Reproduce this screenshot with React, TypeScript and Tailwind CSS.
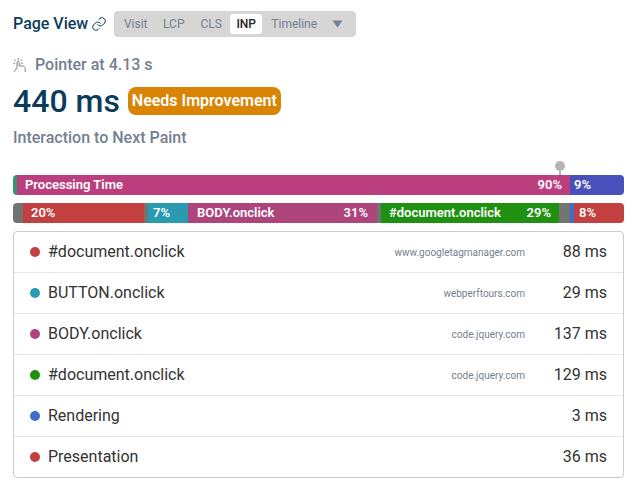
import React from "react";

const rows = [
  { c: "bg-[#c24040]", n: "#document.onclick", d: "www.googletagmanager.com", v: "88 ms" },
  { c: "bg-[#2a9aae]", n: "BUTTON.onclick", d: "webperftours.com", v: "29 ms" },
  { c: "bg-[#ae447c]", n: "BODY.onclick", d: "code.jquery.com", v: "137 ms" },
  { c: "bg-[#209010]", n: "#document.onclick", d: "code.jquery.com", v: "129 ms" },
  { c: "bg-[#3f6fc9]", n: "Rendering", d: "", v: "3 ms" },
  { c: "bg-[#c24040]", n: "Presentation", d: "", v: "36 ms" },
];

function Seg({ w, c, children, between }: { w: string; c: string; children?: React.ReactNode; between?: boolean }) {
  return (
    <div className={`${w} ${c} h-full shrink-0 flex items-center ${between ? "justify-between" : ""} text-white text-[13px] font-semibold overflow-hidden whitespace-nowrap`}>
      {children}
    </div>
  );
}

export default function App() {
  return (
    <div className="w-[643px] h-[488px] bg-white pl-[13px] pr-[19px] pt-[11px] overflow-hidden font-['Roboto',sans-serif]">
      <div className="flex items-center h-[26px]">
        <span className="text-[16px] font-medium text-[#0c3c5c]">Page View</span>
        <svg className="ml-[3px] w-[16px] h-[16px] text-[#0c3c5c]" viewBox="0 0 24 24" fill="none" stroke="currentColor" strokeWidth="1.500" strokeLinecap="round" strokeLinejoin="round">
          <path d="M10 13a5 5 0 0 0 7.500.5l3-3a5 5 0 0 0-7-7l-1.700 1.700" />
          <path d="M14 11a5 5 0 0 0-7.500-.5l-3 3a5 5 0 0 0 7 7l1.700-1.700" />
        </svg>
        <div className="ml-[7px] w-[242px] h-[26px] bg-[#d6d6d6] rounded-[4px] flex items-center pl-[2px] text-[12px] text-[#74808e]">
          <span className="w-[39px] text-center">Visit</span>
          <span className="w-[37px] text-center">LCP</span>
          <span className="w-[38px] text-center">CLS</span>
          <span className="w-[32px] h-[20px] bg-white rounded-[3px] flex items-center justify-center text-[#222] font-medium">INP</span>
          <span className="w-[64px] text-center">Timeline</span>
          <svg className="ml-[6px] w-[11px] h-[8px]" viewBox="0 0 11 8"><path d="M0.500 0.500h10L5.500 7.500z" fill="#74808e" /></svg>
        </div>
      </div>
      <div className="flex items-center mt-[18px] h-[20px]">
        <svg className="w-[14px] h-[16px] text-[#74808e]" viewBox="0 0 14 16" fill="none" stroke="currentColor" strokeWidth="1" strokeLinecap="round" strokeLinejoin="round">
          <path d="M1.500 14.500L4 10.500V5.500a1.100 1.100 0 0 1 2.200 0V9h3.300c1.600 0 2.700 1 2.700 2.500v3" />
          <path d="M5.100 2.800V1.200M2.300 3.600l-1-.8M7.900 3.600l1-.8M1.800 6.200H.8M8.500 6.200h1" />
        </svg>
        <span className="ml-[8px] text-[16px] text-[#74808e] font-medium">Pointer at 4.13 s</span>
      </div>
      <div className="flex items-center mt-[8px] h-[36px]">
        <span className="text-[32px] font-medium text-[#0c3c5c] leading-none">440 ms</span>
        <span className="ml-[8px] h-[28px] w-[153px] rounded-[8px] bg-[#d98404] text-white text-[16px] font-semibold flex items-center justify-center">Needs Improvement</span>
      </div>
      <div className="mt-[9px] h-[20px] flex items-center text-[16px] font-medium text-[#74808e]">Interaction to Next Paint</div>

      <div className="mt-[13px] h-[14px] flex justify-end pr-[59px]">
        <div className="flex flex-col items-center w-[10px]">
          <div className="w-[10px] h-[10px] rounded-full bg-[#b4b4b4]" />
          <div className="w-[2px] h-[4px] bg-[#b4b4b4]" />
        </div>
      </div>
      <div className="h-[20px] w-[611px] flex rounded-[4px] overflow-hidden">
        <Seg w="w-[4px]" c="bg-[#36946a]" />
        <Seg w="w-[553px]" c="bg-[#bb3f7f] pl-[8px] pr-[8px]" between>
          <span>Processing Time</span><span>90%</span>
        </Seg>
        <Seg w="w-[54px]" c="bg-[#4a50bb] pl-[4px]"><span>9%</span></Seg>
      </div>
      <div className="mt-[8px] h-[20px] w-[611px] flex rounded-[4px] overflow-hidden">
        <Seg w="w-[10px]" c="bg-[#737373]" />
        <Seg w="w-[121px]" c="bg-[#c24040] pl-[8px]"><span>20%</span></Seg>
        <Seg w="w-[4px]" c="bg-[#737373]" />
        <Seg w="w-[40px]" c="bg-[#2a9aae] pl-[5px]"><span>7%</span></Seg>
        <Seg w="w-[189px]" c="bg-[#ae447c] pl-[9px] pr-[9px]" between>
          <span>BODY.onclick</span><span>31%</span>
        </Seg>
        <Seg w="w-[4px]" c="bg-[#737373]" />
        <Seg w="w-[178px]" c="bg-[#209010] pl-[8px] pr-[8px]" between>
          <span>#document.onclick</span><span>29%</span>
        </Seg>
        <Seg w="w-[11px]" c="bg-[#737373]" />
        <Seg w="w-[4px]" c="bg-[#3f6fc9]" />
        <Seg w="w-[50px]" c="bg-[#c24040] pl-[5px]"><span>8%</span></Seg>
      </div>

      <div className="mt-[8px] w-[611px] h-[247px] border border-[#cccccc] rounded-[4px] flex flex-col">
        {rows.map((r, i) => (
          <div key={i} className={`flex-1 flex items-center pl-[16px] pr-[16px] ${i ? "border-t border-[#e6e6e6]" : ""}`}>
            <span className={`w-[10px] h-[10px] rounded-full ${r.c}`} />
            <span className="ml-[8px] text-[16px] text-[#333]">{r.n}</span>
            <span className="ml-auto text-[10px] text-[#74808e]">{r.d}</span>
            <span className="w-[82px] text-right text-[16px] text-[#333]">{r.v}</span>
          </div>
        ))}
      </div>
    </div>
  );
}
